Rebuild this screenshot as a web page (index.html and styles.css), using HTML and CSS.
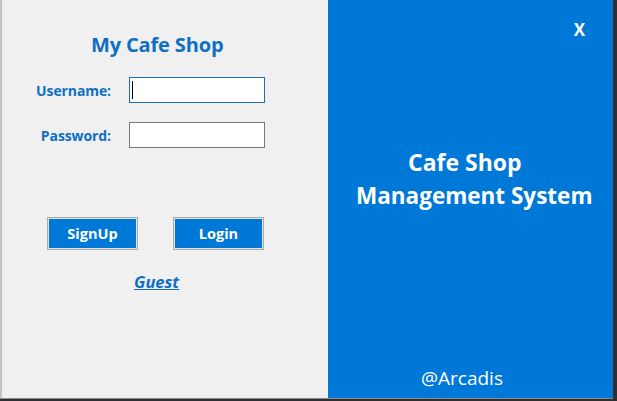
FILE: index.html
```html
<!DOCTYPE html>
<html>
<head>
<meta charset="utf-8">
<link rel="stylesheet" href="styles.css">
</head>
<body>
<div class="window">
  <section class="login-panel">
    <h1 class="title">My Cafe Shop</h1>
    <div class="form">
      <label class="label" for="user">Username:</label>
      <div class="input focused" id="user"><span class="caret"></span></div>
      <label class="label" for="pass">Password:</label>
      <div class="input" id="pass"></div>
    </div>
    <div class="buttons">
      <button class="btn">SignUp</button>
      <button class="btn">Login</button>
    </div>
    <a class="guest" href="#">Guest</a>
  </section>
  <section class="brand-panel">
    <div class="close">X</div>
    <div class="brand-title">
      <span class="line1">Cafe Shop</span>
      <span class="line2">Management System</span>
    </div>
    <div class="credit">@Arcadis</div>
  </section>
</div>
</body>
</html>
```

FILE: styles.css
```css
html, body {
  margin: 0;
  padding: 0;
}
body {
  width: 617px;
  height: 401px;
  background: #2e2f33;
  font-family: "Open Sans", "Noto Sans", "DejaVu Sans", sans-serif;
  overflow: hidden;
}
.window {
  display: flex;
  width: 613px;
  height: 398px;
  border-bottom: 1px solid #8d8d8d;
}
.login-panel {
  width: 326px;
  flex: none;
  background: #f0f0f0;
  border-left: 2px solid #c4c4c4;
  display: flex;
  flex-direction: column;
}
.title {
  margin: 31px 0 0 89px;
  font-size: 20px;
  line-height: 28px;
  font-weight: 700;
  color: #0e6fc5;
  letter-spacing: -0.15px;
}
.form {
  display: grid;
  grid-template-columns: 109px 136px;
  column-gap: 18px;
  row-gap: 19px;
  margin-top: 18px;
  align-items: center;
}
.label {
  justify-self: end;
  font-size: 14px;
  font-weight: 700;
  color: #0e6fc5;
  letter-spacing: -0.1px;
}
.input {
  box-sizing: border-box;
  height: 26px;
  background: #fff;
  border: 1px solid #7a7a7a;
  position: relative;
}
.input.focused {
  border-color: #1f6fb8;
}
.caret {
  position: absolute;
  left: 2px;
  top: 3px;
  width: 1px;
  height: 18px;
  background: #000;
}
.buttons {
  display: flex;
  gap: 35px;
  margin: 69px 0 0 45px;
}
.btn {
  box-sizing: border-box;
  width: 91px;
  height: 33px;
  border: 1px solid #adadad;
  padding: 0;
  background: #0078d7;
  box-shadow: inset 0 0 0 1px #e1e1e1;
  font-family: inherit;
  font-size: 14.5px;
  font-weight: 700;
  color: #fff;
}
.guest {
  align-self: flex-start;
  margin: 20px 0 0 132px;
  font-size: 16.5px;
  font-weight: 700;
  font-style: italic;
  color: #0e6fc5;
  text-decoration: underline;
}
.brand-panel {
  flex: 1;
  background: #0078d7;
  color: #fff;
  display: flex;
  flex-direction: column;
  align-items: flex-start;
}
.close {
  align-self: flex-end;
  margin: 18px 28px 0 0;
  font-size: 17px;
  font-weight: 700;
  line-height: 24px;
}
.brand-title {
  display: flex;
  flex-direction: column;
  align-items: flex-start;
  font-size: 22.5px;
  font-weight: 700;
  line-height: 33px;
  margin-top: 104px;
}
.line1 {
  margin-left: 80px;
  font-size: 23px;
}
.line2 {
  margin-left: 28px;
}
.credit {
  margin-top: auto;
  margin-bottom: 7px;
  margin-left: 93px;
  font-size: 19px;
  line-height: 26px;
}
```
